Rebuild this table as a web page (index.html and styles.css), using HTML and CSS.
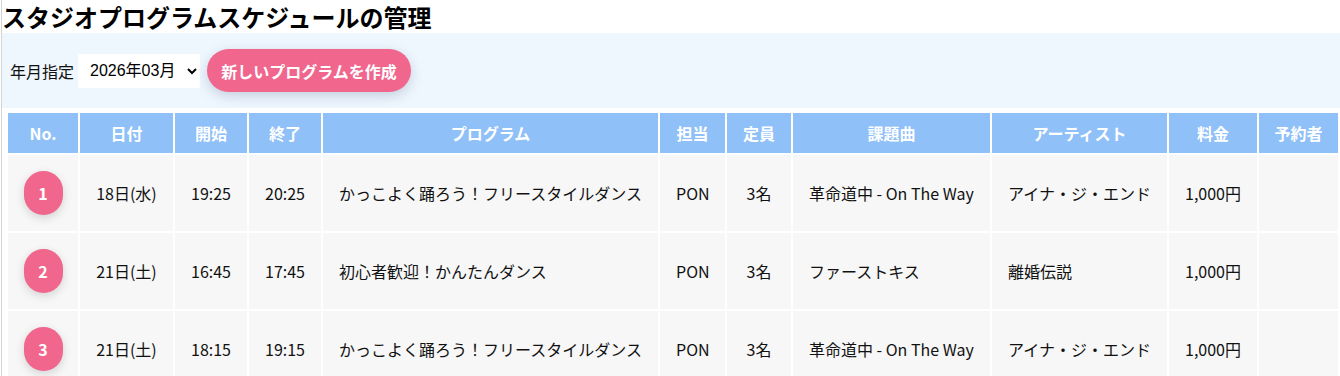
FILE: index.html
```html
<!DOCTYPE html>
<html lang="ja">
<head>
<meta charset="utf-8">
<title>スタジオプログラムスケジュールの管理</title>
<link rel="stylesheet" href="styles.css">
</head>
<body>
<div class="page">
  <h1 class="title">スタジオプログラムスケジュールの管理</h1>
  <div class="toolbar">
    <label class="month-label" for="month">年月指定</label>
    <select id="month" class="month-select">
      <option>2026年03月</option>
    </select>
    <button class="create-btn" type="button">新しいプログラムを作成</button>
  </div>
  <table class="schedule">
    <colgroup>
      <col class="c-no"><col class="c-date"><col class="c-start"><col class="c-end"><col class="c-prog">
      <col class="c-staff"><col class="c-cap"><col class="c-song"><col class="c-artist"><col class="c-fee"><col class="c-res">
    </colgroup>
    <thead>
      <tr>
        <th>No.</th><th>日付</th><th>開始</th><th>終了</th><th>プログラム</th><th>担当</th><th>定員</th><th>課題曲</th><th>アーティスト</th><th>料金</th><th>予約者</th>
      </tr>
    </thead>
    <tbody>
      <tr>
        <td class="no"><span class="badge">1</span></td><td>18日(水)</td><td>19:25</td><td>20:25</td>
        <td class="left">かっこよく踊ろう！フリースタイルダンス</td><td>PON</td><td>3名</td>
        <td class="left">革命道中 - On The Way</td><td class="left">アイナ・ジ・エンド</td><td>1,000円</td><td></td>
      </tr>
      <tr>
        <td class="no"><span class="badge">2</span></td><td>21日(土)</td><td>16:45</td><td>17:45</td>
        <td class="left">初心者歓迎！かんたんダンス</td><td>PON</td><td>3名</td>
        <td class="left">ファーストキス</td><td class="left">離婚伝説</td><td>1,000円</td><td></td>
      </tr>
      <tr>
        <td class="no"><span class="badge">3</span></td><td>21日(土)</td><td>18:15</td><td>19:15</td>
        <td class="left">かっこよく踊ろう！フリースタイルダンス</td><td>PON</td><td>3名</td>
        <td class="left">革命道中 - On The Way</td><td class="left">アイナ・ジ・エンド</td><td>1,000円</td><td></td>
      </tr>
    </tbody>
  </table>
</div>
</body>
</html>
```

FILE: styles.css
```css
html, body {
  margin: 0;
  padding: 0;
  background: #ffffff;
}
body {
  font-family: "Noto Sans CJK JP", "Noto Sans", sans-serif;
  color: #111111;
  overflow: hidden;
}
.page {
  margin-left: 1px;
  border-left: 1px solid #d4d4d4;
  min-height: 376px;
}
.title {
  margin: 0;
  font-size: 24px;
  line-height: 33px;
  font-weight: 700;
  color: #000000;
}
.toolbar {
  display: flex;
  align-items: center;
  background: #eef6fe;
  padding: 16px 8px 16px 8px;
  height: 43px;
}
.month-label {
  font-size: 16px;
  margin-right: 4px;
}
.month-select {
  font-family: "Liberation Sans", "Noto Sans CJK JP", sans-serif;
  font-size: 16px;
  height: 34px;
  width: 122px;
  border: none;
  background: #ffffff;
  padding: 0 6px 0 8px;
  color: #000;
  margin-right: 7px;
}
.create-btn {
  font-family: "Noto Sans CJK JP", sans-serif;
  font-size: 16px;
  font-weight: 700;
  color: #ffffff;
  background: #f0668c;
  border: none;
  border-radius: 22px;
  height: 43px;
  width: 204px;
  padding: 0;
  box-shadow: 0 4px 12px rgba(80, 100, 130, 0.25);
}
.schedule {
  margin-top: 3px;
  margin-left: 4px;
  width: 1334px;
  border-spacing: 2px;
  table-layout: fixed;
  font-size: 16px;
}
.c-no { width: 70px; }
.c-date { width: 93px; }
.c-start { width: 72px; }
.c-end { width: 72px; }
.c-prog { width: 335px; }
.c-staff { width: 65px; }
.c-cap { width: 64px; }
.c-song { width: 197px; }
.c-artist { width: 175px; }
.c-fee { width: 88px; }
.c-res { width: 79px; }
.schedule th {
  background: #8fc0f8;
  color: #ffffff;
  font-weight: 700;
  height: 40px;
  padding: 0;
  text-align: center;
}
.schedule td {
  background: #f7f7f7;
  height: 76px;
  padding: 0 16px;
  text-align: center;
  white-space: nowrap;
}
.schedule td.no {
  padding: 0;
}
.schedule td.left {
  text-align: left;
}
.badge {
  display: inline-flex;
  align-items: center;
  justify-content: center;
  width: 39px;
  height: 44px;
  border-radius: 20px;
  background: #f0668c;
  color: #ffffff;
  font-weight: 700;
  font-size: 16px;
  box-shadow: 0 3px 10px rgba(0, 0, 0, 0.15);
  vertical-align: middle;
}
```
